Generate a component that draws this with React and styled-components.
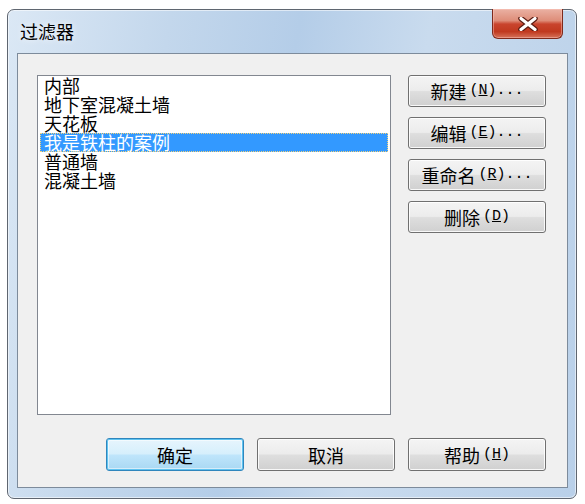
import React from 'react';
import styled, { createGlobalStyle } from 'styled-components';

const Global = createGlobalStyle`
  html, body {
    margin: 0;
    background: #ffffff;
  }
  body {
    font-family: "Noto Sans CJK SC", "Liberation Sans", sans-serif;
  }
`;

const Page = styled.div`
  padding: 9px 0 0 7px;
`;

const Window = styled.div`
  width: 570px;
  box-sizing: border-box;
  border: 1px solid #5f6670;
  border-radius: 7px;
  padding: 0 8px 10px 9px;
  background: linear-gradient(100deg, #dbe8f5 0%, #c3d7ec 25%, #b4cde8 45%, #c9dbee 65%, #b9d0e9 100%);
  box-shadow: inset 0 0 0 1px rgba(255,255,255,0.55);
`;

const TitleBar = styled.div`
  height: 43px;
  display: flex;
  align-items: flex-start;
  justify-content: space-between;
`;

const Title = styled.span`
  margin: 10px 0 0 3px;
  font-size: 18px;
  line-height: 22px;
  color: #000;
  text-shadow: 0 0 6px rgba(255,255,255,0.9);
`;

const CloseButton = styled.div`
  width: 71px;
  height: 30px;
  margin: -1px 5px 0 0;
  box-sizing: border-box;
  border: 1px solid #7e2a1c;
  border-top: none;
  border-radius: 0 0 6px 6px;
  background: linear-gradient(#eab1a3 0%, #de8d79 40%, #c9442d 52%, #c0391f 78%, #d6735a 100%);
  box-shadow: inset 0 0 0 1px rgba(255,200,190,0.45);
  display: flex;
  align-items: center;
  justify-content: center;
`;

const Client = styled.div`
  border: 1px solid #7d8b9b;
  background: #f0f0f0;
  padding: 21px 21px 16px 19px;
  display: flex;
  flex-direction: column;
  gap: 23px;
`;

const TopRow = styled.div`
  display: flex;
  gap: 17px;
  align-items: flex-start;
`;

const ListBox = styled.ul`
  width: 354px;
  height: 340px;
  box-sizing: border-box;
  margin: 0;
  padding: 0 2px;
  list-style: none;
  background: #ffffff;
  border: 1px solid #828790;
`;

const ListItem = styled.li`
  height: 19px;
  line-height: 19px;
  padding-left: 4px;
  box-sizing: border-box;
  font-size: 18px;
  white-space: nowrap;
  color: ${p => (p.$selected ? '#ffffff' : '#000000')};
  background: ${p => (p.$selected ? '#3399ff' : 'transparent')};
  outline: ${p => (p.$selected ? '1px dotted #f3d27a' : 'none')};
  outline-offset: -1px;
`;

const SideColumn = styled.div`
  width: 138px;
  display: flex;
  flex-direction: column;
  gap: 10px;
`;

const PushButton = styled.div`
  height: ${p => p.$h || 33}px;
  box-sizing: border-box;
  border: 1px solid ${p => (p.$default ? '#2f86bd' : '#707070')};
  border-radius: 3px;
  background: ${p =>
    p.$default
      ? 'linear-gradient(#e7f5fd 0%, #d6effc 48%, #bfe5fb 52%, #a8d8f3 100%)'
      : 'linear-gradient(#f4f4f4 0%, #ececec 48%, #dedede 52%, #d0d0d0 100%)'};
  box-shadow: ${p =>
    p.$default
      ? 'inset 0 0 0 1px #5fc3f0, inset 0 0 0 2px rgba(255,255,255,0.5)'
      : 'inset 0 0 0 1px rgba(255,255,255,0.85)'};
  display: flex;
  align-items: center;
  justify-content: center;
  font-size: 18px;
  line-height: 20px;
  color: #000;
  white-space: nowrap;
`;

const Mnemonic = styled.span`
  font-family: "Liberation Mono", monospace;
  font-size: 15px;
  margin-left: 3px;
`;

const BottomRow = styled.div`
  display: flex;
  justify-content: flex-end;
  gap: 13px;
`;

const DialogButton = styled(PushButton)`
  width: 138px;
`;

const items = ['内部', '地下室混凝土墙', '天花板', '我是铁柱的案例', '普通墙', '混凝土墙'];

const CloseGlyph = () => (
  <svg width="20" height="14" viewBox="0 0 20 14">
    <path d="M3 1.5 L17 12.5 M17 1.5 L3 12.5" stroke="#5a1a10" strokeWidth="5.5" strokeLinecap="round" />
    <path d="M3 1.5 L17 12.5 M17 1.5 L3 12.5" stroke="#ffffff" strokeWidth="3.2" strokeLinecap="round" />
  </svg>
);

const Label = ({ text, k, dots }) => (
  <>
    {text}
    <Mnemonic>
      (<u>{k}</u>){dots ? '...' : ''}
    </Mnemonic>
  </>
);

export default function App() {
  return (
    <>
      <Global />
      <Page>
        <Window>
          <TitleBar>
            <Title>过滤器</Title>
            <CloseButton>
              <CloseGlyph />
            </CloseButton>
          </TitleBar>
          <Client>
            <TopRow>
              <ListBox>
                {items.map((it, i) => (
                  <ListItem key={i} $selected={i === 3}>
                    {it}
                  </ListItem>
                ))}
              </ListBox>
              <SideColumn>
                <PushButton $h={32}><Label text="新建" k="N" dots /></PushButton>
                <PushButton $h={32}><Label text="编辑" k="E" dots /></PushButton>
                <PushButton $h={32}><Label text="重命名" k="R" dots /></PushButton>
                <PushButton $h={32}><Label text="删除" k="D" /></PushButton>
              </SideColumn>
            </TopRow>
            <BottomRow>
              <DialogButton $default>确定</DialogButton>
              <DialogButton>取消</DialogButton>
              <DialogButton><Label text="帮助" k="H" /></DialogButton>
            </BottomRow>
          </Client>
        </Window>
      </Page>
    </>
  );
}
